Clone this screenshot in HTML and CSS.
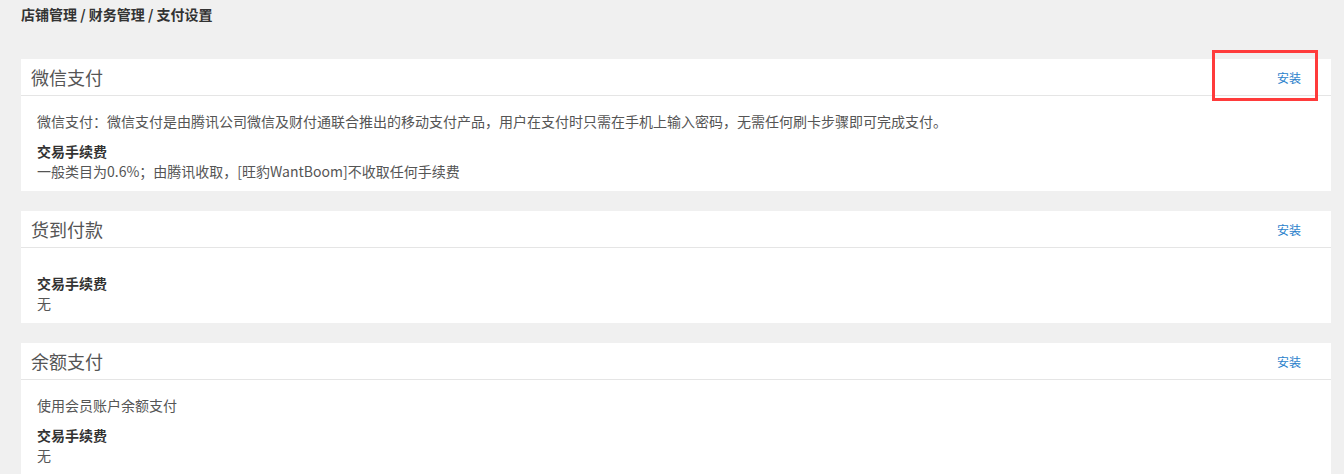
FILE: index.html
```html
<!DOCTYPE html>
<html lang="zh-CN">
<head>
    <meta charset="UTF-8">
    <meta name="viewport" content="width=device-width, initial-scale=1.0">
    <title>支付设置</title>
    <link rel="stylesheet" href="styles.css">
</head>
<body>
    <div class="breadcrumb">店铺管理 / 财务管理 / 支付设置</div>
    <main>
        <section class="pay-card">
            <div class="pay-head">
                <h2>微信支付</h2>
                <a href="#" class="install">安装</a>
                <span class="mark"></span>
            </div>
            <div class="pay-body">
                <p class="desc">微信支付：微信支付是由腾讯公司微信及财付通联合推出的移动支付产品，用户在支付时只需在手机上输入密码，无需任何刷卡步骤即可完成支付。</p>
                <h3>交易手续费</h3>
                <p class="fee">一般类目为0.6%；由腾讯收取，[旺豹WantBoom]不收取任何手续费</p>
            </div>
        </section>
        <section class="pay-card">
            <div class="pay-head">
                <h2>货到付款</h2>
                <a href="#" class="install">安装</a>
            </div>
            <div class="pay-body">
                <p class="desc"></p>
                <h3>交易手续费</h3>
                <p class="fee">无</p>
            </div>
        </section>
        <section class="pay-card">
            <div class="pay-head">
                <h2>余额支付</h2>
                <a href="#" class="install">安装</a>
            </div>
            <div class="pay-body">
                <p class="desc">使用会员账户余额支付</p>
                <h3>交易手续费</h3>
                <p class="fee">无</p>
            </div>
        </section>
    </main>
</body>
</html>
```

FILE: styles.css
```css
* {
    box-sizing: border-box;
    margin: 0;
    padding: 0;
}
body {
    font-family: "Noto Sans CJK SC", "Liberation Sans", sans-serif;
    font-size: 14px;
    color: #555;
    background-color: #f0f0f0;
    padding: 0 13px 0 21px;
}
.breadcrumb {
    font-weight: bold;
    color: #333;
    line-height: 20px;
    padding-top: 4px;
    height: 59px;
}
.pay-card {
    background: #fff;
    margin-bottom: 20px;
    position: relative;
}
.pay-head {
    display: flex;
    align-items: center;
    justify-content: space-between;
    height: 37px;
    padding: 0 30px 0 10px;
    border-bottom: 1px solid #e5e5e5;
}
.pay-head h2 {
    font-size: 18px;
    font-weight: normal;
    color: #555;
}
.install {
    font-size: 12px;
    color: #2b7fcc;
    text-decoration: none;
}
.mark {
    position: absolute;
    right: 13px;
    top: -9px;
    width: 106px;
    height: 51px;
    border: 3px solid #ff3b3b;
}
.pay-body {
    padding: 15px 16px 10px;
    line-height: 20px;
}
.desc {
    margin-bottom: 10px;
}
.pay-body h3 {
    font-size: 14px;
    font-weight: bold;
    color: #333;
}
```
